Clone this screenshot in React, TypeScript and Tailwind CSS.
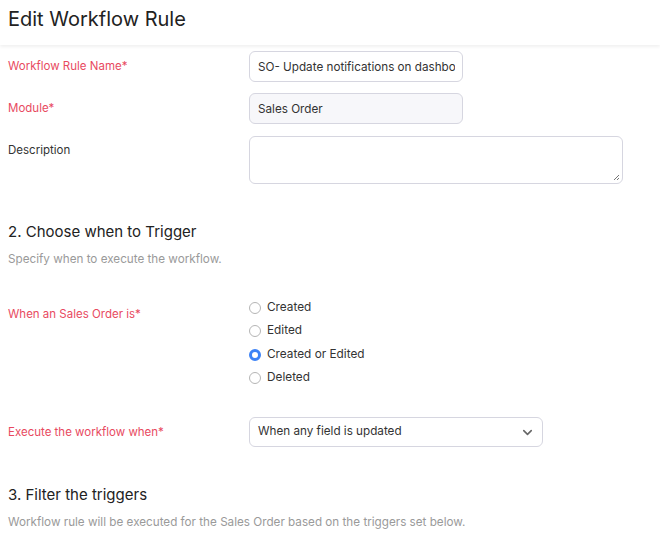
import { ChevronDown } from "lucide-react";

const options = ["Created", "Edited", "Created or Edited", "Deleted"];

function Label({ text, req }: { text: string; req?: boolean }) {
  return (
    <div className={`w-[249px] shrink-0 pl-2 text-[11.5px] ${req ? "text-[#e84a5f]" : "text-[#333]"}`}>
      {text}
    </div>
  );
}

export default function App() {
  return (
    <div className="h-[553px] w-[660px] overflow-hidden bg-white font-['Inter',sans-serif] text-[#222]">
      <div className="relative z-10 h-[45px] pl-2 pt-[4px] text-[20px] shadow-[0_2px_3px_rgba(0,0,0,0.06)]">
        Edit Workflow Rule
      </div>

      <div className="mt-[6px] flex items-start">
        <div className="pt-[7px]">
          <Label text="Workflow Rule Name*" req />
        </div>
        <div className="h-[31px] w-[214px] overflow-hidden whitespace-nowrap rounded-md border border-[#d6d6e0] pl-2 pt-[7px] text-[11.7px] text-[#333]">
          <div className="w-[197px] overflow-hidden">SO- Update notifications on dashboard</div>
        </div>
      </div>

      <div className="mt-[11px] flex items-start">
        <div className="pt-[7px]">
          <Label text="Module*" req />
        </div>
        <div className="h-[31px] w-[214px] rounded-md border border-[#d6d6e0] bg-[#f7f7fa] px-2 pt-[7px] text-[11.7px] text-[#333]">
          Sales Order
        </div>
      </div>

      <div className="mt-[12px] flex items-start">
        <div className="pt-[6px]">
          <Label text="Description" />
        </div>
        <div className="relative h-[48px] w-[374px] rounded-md border border-[#d6d6e0]">
          <svg className="absolute bottom-[2px] right-[2px]" width="7" height="7" viewBox="0 0 7 7">
            <path d="M6 1L1 6M6 4L4 6" stroke="#777" strokeWidth="1" />
          </svg>
        </div>
      </div>

      <div className="mt-[37px] pl-2 text-[15px] text-[#222]">2. Choose when to Trigger</div>
      <div className="mt-[7px] pl-2 text-[11.7px] text-[#9a9a9a]">Specify when to execute the workflow.</div>

      <div className="mt-[31px] flex items-start">
        <div className="pt-[7px]">
          <Label text="When an Sales Order is*" req />
        </div>
        <div className="flex flex-col gap-[6px]">
          {options.map((o) => (
            <div key={o} className="flex h-[17.5px] items-center gap-[6px] text-[11.8px] text-[#333]">
              {o === "Created or Edited" ? (
                <span className="h-[12px] w-[12px] rounded-full border-[3.5px] border-[#3b82f6] bg-white" />
              ) : (
                <span className="h-[12px] w-[12px] rounded-full border border-[#b5b5b5] bg-white" />
              )}
              {o}
            </div>
          ))}
        </div>
      </div>

      <div className="mt-[30px] flex items-start">
        <div className="pt-[7px]">
          <Label text="Execute the workflow when*" req />
        </div>
        <div className="flex h-[30px] w-[294px] items-center justify-between rounded-md border border-[#d6d6e0] pl-2 pr-[7px] text-[11.7px] text-[#333]">
          When any field is updated
          <ChevronDown size={15} strokeWidth={2.5} className="text-[#666]" />
        </div>
      </div>

      <div className="mt-[37px] pl-2 text-[15px] text-[#222]">3. Filter the triggers</div>
      <div className="mt-[7px] pl-2 text-[11.7px] text-[#9a9a9a]">
        Workflow rule will be executed for the Sales Order based on the triggers set below.
      </div>
    </div>
  );
}
